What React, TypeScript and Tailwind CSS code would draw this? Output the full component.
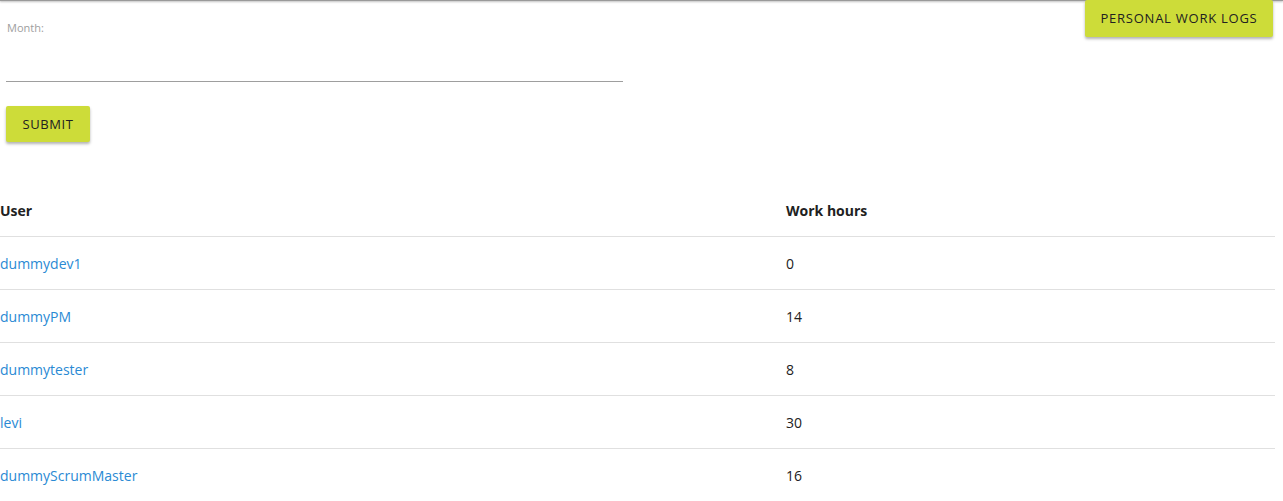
import React from "react";

const rows = [
  { user: "dummydev1", hours: 0 },
  { user: "dummyPM", hours: 14 },
  { user: "dummytester", hours: 8 },
  { user: "levi", hours: 30 },
  { user: "dummyScrumMaster", hours: 16 },
];

export default function App() {
  return (
    <div className="min-h-screen bg-white text-[14px] text-[#212121]" style={{ fontFamily: '"Open Sans", "Noto Sans", sans-serif' }}>
      <div className="h-[1px] bg-[#9a9a9a] shadow-[0_1px_2px_rgba(0,0,0,0.35)]" />
      <div className="flex items-start justify-between">
        <div className="w-[623px] pl-[6px]">
          <div className="pt-[20px] pl-[1px] text-[11px] leading-[14px] text-[#9e9e9e]">Month:</div>
          <div className="mt-[46px] h-[1px] bg-[#9e9e9e]" />
          <button className="mt-[24px] h-[36px] w-[84px] rounded-[2px] bg-[#cddc39] pt-[1px] text-[13px] tracking-[0.6px] text-[#212121] shadow-[0_2px_3px_rgba(0,0,0,0.3)]">
            SUBMIT
          </button>
        </div>
        <button className="mr-[10px] -mt-[1px] h-[37px] w-[188px] rounded-[2px] bg-[#cddc39] text-[13px] tracking-[0.75px] text-[#212121] shadow-[0_2px_3px_rgba(0,0,0,0.3)]">
          PERSONAL WORK LOGS
        </button>
      </div>
      <table className="mt-[42px] w-[1275px] border-collapse text-left">
        <thead>
          <tr className="h-[52px] border-b border-[#e0e0e0]">
            <th className="w-[786px] p-0 pt-[2px] font-bold">User</th>
            <th className="p-0 pt-[2px] font-bold">Work hours</th>
          </tr>
        </thead>
        <tbody>
          {rows.map((r) => (
            <tr key={r.user} className="h-[53px] border-b border-[#e0e0e0]">
              <td className="p-0 pt-[2px] text-[#2a8ad4]">{r.user}</td>
              <td className="p-0 pt-[2px]">{r.hours}</td>
            </tr>
          ))}
        </tbody>
      </table>
    </div>
  );
}
